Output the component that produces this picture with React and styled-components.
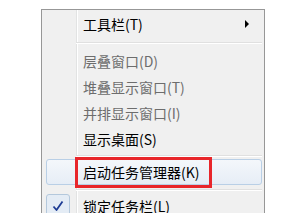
import React from "react";
import styled, { createGlobalStyle } from "styled-components";

const GlobalStyle = createGlobalStyle`
  html, body {
    margin: 0;
    padding: 0;
    background: #ffffff;
    overflow: hidden;
  }
  body {
    font-family: "Noto Sans CJK SC", "Liberation Sans", sans-serif;
  }
`;

const Page = styled.div`
  width: 300px;
  height: 213px;
  padding: 9px 0 0 41px;
  box-sizing: border-box;
`;

// Win7 style context menu, the gutter line is part of the background
const Menu = styled.div`
  width: 224px;
  min-height: 230px;
  box-sizing: border-box;
  border: 1px solid #979797;
  padding: 1px 2px 0 4px;
  background:
    linear-gradient(
      to right,
      transparent 34px,
      #e2e3e3 34px,
      #e2e3e3 35px,
      #ffffff 35px,
      #ffffff 36px,
      transparent 36px
    ),
    #f0f0f0;
`;

const Item = styled.div`
  position: relative;
  height: 26px;
  box-sizing: border-box;
  display: flex;
  align-items: center;
  padding-right: 12px;
  font-size: 14px;
  color: ${(p) => (p.$disabled ? "#6d6d6d" : "#000000")};
  border: 1px solid ${(p) => (p.$active ? "#b9cfe6" : "transparent")};
  border-radius: 3px;
  background: ${(p) =>
    p.$active ? "linear-gradient(#f4f7fb, #e6edf6)" : "transparent"};
`;

const Gutter = styled.div`
  width: 36px;
  height: 100%;
  flex: none;
  display: flex;
  align-items: center;
`;

const Label = styled.span`
  white-space: nowrap;
  line-height: 1;
`;

const Arrow = styled.span`
  margin-left: auto;
  width: 0;
  height: 0;
  border-top: 4px solid transparent;
  border-bottom: 4px solid transparent;
  border-left: 4px solid #000000;
`;

const Separator = styled.div`
  height: ${(p) => p.$h}px;
  display: flex;
  align-items: center;
  padding-left: 30px;
  &::before {
    content: "";
    flex: 1;
    height: 1px;
    background: #e0e0e0;
    box-shadow: 0 1px 0 #ffffff;
  }
`;

const CheckBox = styled.div`
  width: 24px;
  height: 24px;
  margin-left: -1px;
  box-sizing: border-box;
  border: 1px solid #b4c8dc;
  border-radius: 3px;
  background: #e4ecf5;
  display: flex;
  align-items: center;
  justify-content: center;
`;

// annotation drawn over the highlighted entry
const RedFrame = styled.div`
  position: absolute;
  left: 28px;
  top: -3px;
  width: 137px;
  height: 31px;
  box-sizing: border-box;
  border: 3px solid #e8262b;
  pointer-events: none;
`;

const items = [
  { type: "item", label: "工具栏(T)", submenu: true },
  { type: "sep", h: 11 },
  { type: "item", label: "层叠窗口(D)", disabled: true },
  { type: "item", label: "堆叠显示窗口(T)", disabled: true },
  { type: "item", label: "并排显示窗口(I)", disabled: true },
  { type: "item", label: "显示桌面(S)" },
  { type: "sep", h: 7 },
  { type: "item", label: "启动任务管理器(K)", active: true },
  { type: "sep", h: 8 },
  { type: "item", label: "锁定任务栏(L)", checked: true },
];

const Check = () => (
  <svg width="14" height="14" viewBox="0 0 14 14">
    <path
      d="M2.5 7.5 L5.5 11 L11.5 2.5"
      fill="none"
      stroke="#1e3c94"
      strokeWidth="1.8"
      strokeLinejoin="round"
    />
  </svg>
);

export default function App() {
  return (
    <Page>
      <GlobalStyle />
      <Menu>
        {items.map((it, i) =>
          it.type === "sep" ? (
            <Separator key={i} $h={it.h} />
          ) : (
            <Item key={i} $disabled={it.disabled} $active={it.active}>
              <Gutter>
                {it.checked && (
                  <CheckBox>
                    <Check />
                  </CheckBox>
                )}
              </Gutter>
              <Label>{it.label}</Label>
              {it.submenu && <Arrow />}
              {it.active && <RedFrame />}
            </Item>
          )
        )}
      </Menu>
    </Page>
  );
}
